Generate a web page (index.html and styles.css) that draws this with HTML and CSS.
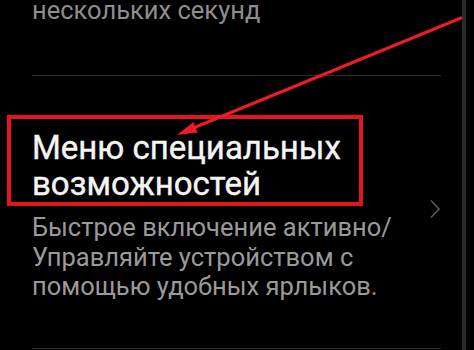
FILE: index.html
```html
<!DOCTYPE html>
<html lang="ru">
<head>
	<meta charset="UTF-8">
	<meta name="viewport" content="width=device-width, initial-scale=1">
	<title>Меню специальных возможностей</title>
	<link rel="stylesheet" href="styles.css">
</head>
<body>
	<div class="screen">
		<div class="list">
			<div class="item item-prev">
				<p class="summary">нескольких секунд</p>
			</div>

			<div class="item item-menu">
				<div class="item-text">
					<h2 class="title">Меню специальных возможностей</h2>
					<p class="summary">Быстрое включение активно/<br>Управляйте устройством с<br>помощью удобных ярлыков.</p>
				</div>
				<svg class="chevron" width="12" height="20" viewBox="0 0 12 20" aria-hidden="true">
					<path d="M2 1.5 L10 10 L2 18.5" fill="none" stroke="#5a5a5a" stroke-width="1.6"/>
				</svg>
			</div>
		</div>
		<div class="scrollbar"></div>

		<!-- annotation drawn over the screenshot -->
		<div class="mark-box"></div>
		<svg class="mark-arrow" width="474" height="350" viewBox="0 0 474 350" aria-hidden="true">
			<line x1="461" y1="18" x2="192" y2="128.5" stroke="#ec1c24" stroke-width="3" stroke-linecap="round"/>
			<polygon points="177,135 197.5,132.5 193.5,122" fill="#ec1c24"/>
		</svg>
	</div>
</body>
</html>
```

FILE: styles.css
```css
* {
	box-sizing: border-box;
}

html, body {
	margin: 0;
	padding: 0;
	background: #000;
}

body {
	font-family: Roboto, "Noto Sans", sans-serif;
	color: #9a9a9a;
	overflow: hidden;
}

.screen {
	position: relative;
	display: flex;
	width: 474px;
	height: 350px;
	overflow: hidden;
}

.list {
	flex: 1;
	padding-left: 32px;
	padding-right: 21px;
}

.scrollbar {
	width: 4px;
	margin-right: 8px;
	background: #2b2b2b;
}

.item {
	border-bottom: 1px solid #2e2e2e;
}

.summary {
	margin: 0;
	font-size: 25.5px;
	line-height: 29.5px;
	color: #9a9a9a;
}

.item-prev {
	display: flow-root;
	height: 76px;
}

.item-prev .summary {
	margin-top: -6px;
	line-height: 32px;
	color: #8e8e8e;
}

.item-menu {
	display: flex;
	align-items: center;
	padding-top: 54px;
	padding-bottom: 46px;
}

.item-text {
	flex: 1;
}

.title {
	margin: 0 0 11px;
	width: 330px;
	font-size: 33px;
	line-height: 36px;
	font-weight: 400;
	color: #f4f4f4;
	-webkit-text-stroke: 0.4px #f4f4f4;
}

.chevron {
	margin-bottom: 14px;
}

.mark-box {
	position: absolute;
	left: 7px;
	top: 115px;
	width: 356px;
	height: 91px;
	border: 4px solid #e3151d;
}

.mark-arrow {
	position: absolute;
	left: 0;
	top: 0;
}
```
